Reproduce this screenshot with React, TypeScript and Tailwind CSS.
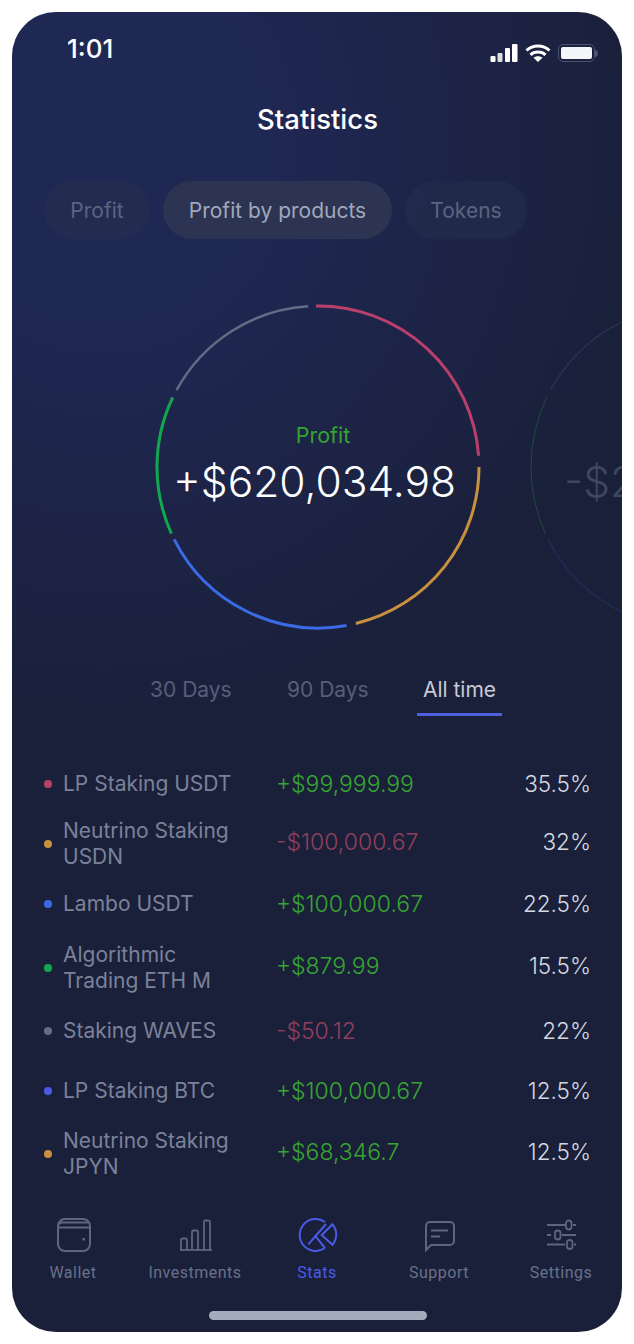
import React from "react";

const polar = (cx: number, cy: number, r: number, deg: number) => {
  const a = ((deg - 90) * Math.PI) / 180;
  return [cx + r * Math.cos(a), cy + r * Math.sin(a)];
};
const arc = (start: number, end: number, r = 161) => {
  const [x1, y1] = polar(163, 163, r, start);
  const [x2, y2] = polar(163, 163, r, end);
  return `M${x1.toFixed(2)} ${y1.toFixed(2)}A${r} ${r} 0 ${end - start > 180 ? 1 : 0} 1 ${x2.toFixed(2)} ${y2.toFixed(2)}`;
};

const Ring = ({ faded }: { faded?: boolean }) => (
  <svg width="326" height="326" viewBox="0 0 326 326" fill="none" strokeWidth={faded ? 1.5 : 3} className="absolute inset-0">
    {faded ? (
      <>
        <path d={arc(298.5, 360)} stroke="#2a3152" />
        <path d={arc(245.6, 295.6)} stroke="#1f4a3e" strokeWidth="1" />
        <path d={arc(170, 243.3)} stroke="#222b55" />
      </>
    ) : (
      <>
        <path d={arc(-0.7, 86)} stroke="#b8406a" />
        <path d={arc(90, 166.4)} stroke="#c8903f" />
        <path d={arc(169.8, 243.3)} stroke="#3a6ae6" />
        <path d={arc(245.6, 295.6)} stroke="#12a84f" />
        <path d={arc(298.5, 356.5)} stroke="#646c84" strokeWidth="2.5" />
      </>
    )}
  </svg>
);

const rows = [
  { dot: "bg-[#b8406a]", name: ["LP Staking USDT"], amt: "+$99,999.99", pos: true, pct: "35.5%", h: "h-[60px]" },
  { dot: "bg-[#c8903f]", name: ["Neutrino Staking", "USDN"], amt: "-$100,000.67", pos: false, pct: "32%", h: "h-[60px]" },
  { dot: "bg-[#3a6ae6]", name: ["Lambo USDT"], amt: "+$100,000.67", pos: true, pct: "22.5%", h: "h-[60px]" },
  { dot: "bg-[#12a84f]", name: ["Algorithmic", "Trading ETH M"], amt: "+$879.99", pos: true, pct: "15.5%", h: "h-[68px]" },
  { dot: "bg-[#646c84]", name: ["Staking WAVES"], amt: "-$50.12", pos: false, pct: "22%", h: "h-[58px]" },
  { dot: "bg-[#4a5be6]", name: ["LP Staking BTC"], amt: "+$100,000.67", pos: true, pct: "12.5%", h: "h-[62px]" },
  { dot: "bg-[#c8903f]", name: ["Neutrino Staking", "JPYN"], amt: "+$68,346.7", pos: true, pct: "12.5%", h: "h-[64px]" },
];

const Wallet = () => (
  <svg width="36" height="36" viewBox="0 0 36 36" fill="none" stroke="currentColor" strokeWidth="2">
    <rect x="3" y="2" width="32" height="32" rx="7" />
    <path d="M4 8c0-1.500 1-2.500 3-2.500h26M4 10.500h30" strokeWidth="1.800" />
    <rect x="27.500" y="21" width="2.500" height="2.500" fill="currentColor" stroke="none" />
  </svg>
);
const Bars = () => (
  <svg width="36" height="36" viewBox="0 0 36 36" fill="none" stroke="currentColor" strokeWidth="1.800">
    <path d="M3 33h32" />
    <path d="M4 33V23a1.500 1.500 0 0 1 1.500-1.500h3A1.500 1.500 0 0 1 10 23v10" />
    <path d="M15 33V15a1.500 1.500 0 0 1 1.500-1.500h3A1.500 1.500 0 0 1 21 15v18" />
    <path d="M27 33V5a1.500 1.500 0 0 1 1.500-1.500h3A1.500 1.500 0 0 1 33 5v28" />
  </svg>
);
const Pie = () => (
  <svg width="38" height="38" viewBox="0 0 38 38" fill="none" stroke="currentColor" strokeWidth="2" className="overflow-visible">
    <path d="M27 6A16 16 0 1 0 27 32" />
    <path d="M10.300 28.300 28 8" />
    <path d="M17 19.700 27 32" />
    <path d="M23.700 19 34.500 8.300A16 16 0 0 1 34.500 28.800z" />
  </svg>
);
const Chat = () => (
  <svg width="34" height="36" viewBox="0 0 34 36" fill="none" stroke="currentColor" strokeWidth="2">
    <path d="M8 5h20a4 4 0 0 1 4 4v15a4 4 0 0 1-4 4H9l-5 5V9a4 4 0 0 1 4-4z" />
    <path d="M9 13.500h17M9 19.500h9" />
  </svg>
);
const Sliders = () => (
  <svg width="32" height="32" viewBox="0 0 32 32" fill="none" stroke="currentColor" strokeWidth="1.800">
    <path d="M2 6h18M28 6h3M2 16h4M17 16h14M2 25.500h18M29 25.500h2" />
    <rect x="21" y="1.500" width="5.500" height="9" rx="2.700" />
    <rect x="10" y="11.500" width="5.500" height="9" rx="2.700" />
    <rect x="22" y="21" width="5.500" height="9" rx="2.700" />
  </svg>
);

const nav = [
  { label: "Wallet", Icon: Wallet },
  { label: "Investments", Icon: Bars },
  { label: "Stats", Icon: Pie, active: true },
  { label: "Support", Icon: Chat },
  { label: "Settings", Icon: Sliders },
];

export default function App() {
  return (
    <div className="min-h-[1344px] w-[634px] bg-white pt-3 pl-3 font-['Inter',sans-serif]">
      <div className="relative flex h-[1320px] w-[610px] flex-col overflow-hidden rounded-[44px] bg-[#1a2039] bg-[radial-gradient(ellipse_560px_600px_at_90px_130px,#1f2753_0%,#1f2753_30%,#1a2039_100%)]">
        <div className="flex h-[50px] shrink-0 items-end justify-between pr-[24px] pl-[55px]">
          <span className="text-[26px] leading-[26px] font-medium text-white">1:01</span>
          <div className="flex items-center gap-[7px]">
            <svg width="28" height="18" viewBox="0 0 28 18" fill="#fff">
              <rect x="0.500" y="12" width="5" height="6" rx="1" />
              <rect x="7.500" y="9" width="5" height="9" rx="1" opacity="0.85" />
              <rect x="15" y="4" width="5" height="14" rx="1" />
              <rect x="22" y="0" width="5.500" height="18" rx="1" />
            </svg>
            <svg width="26" height="18" viewBox="0 0 26 18" fill="none" stroke="#fff" strokeWidth="3">
              <path d="M1.500 6.500c6.500-6 16.500-6 23 0" />
              <path d="M5.500 10.800c4-3.600 11-3.600 15 0" />
              <path d="M13 18l-4.500-4.200c2.500-2 6.500-2 9 0z" fill="#fff" stroke="none" />
            </svg>
            <div className="flex items-center">
              <div className="h-[18px] w-[37px] rounded-[5px] border-[1.500px] border-[#4a5270] p-[2px]">
                <div className="h-full w-full rounded-[2px] bg-[#f4f5f7]" />
              </div>
              <div className="h-[7px] w-[3px] rounded-r bg-[#4a5270]" />
            </div>
          </div>
        </div>

        <h1 className="mt-[41px] pl-[1px] text-center text-[27.500px] leading-[32px] font-medium text-white">Statistics</h1>

        <div className="mt-[46px] flex gap-[13px] pl-[32px] text-[21px] leading-[60px]">
          <div className="h-[58px] w-[106px] rounded-full bg-[#293050]/45 text-center text-[#5b6480]">Profit</div>
          <div className="h-[58px] w-[229px] rounded-full bg-[#2c3452] text-center text-[#a1a8bd]">Profit by products</div>
          <div className="h-[58px] w-[122px] rounded-full bg-[#293050]/45 text-center text-[#5b6480]">Tokens</div>
        </div>

        <div className="mt-[65px] flex h-[326px] gap-[48px] pl-[143px]">
          <div className="relative h-[326px] w-[326px] shrink-0">
            <Ring />
            <div className="flex h-full flex-col items-center pt-[117px]">
              <span className="ml-[10px] text-[21.500px] leading-[28px] text-[#35a32f]">Profit</span>
              <span className="mt-[8px] mr-[7px] text-[42.500px] leading-[50px] font-light text-white">+$620,034.98</span>
            </div>
          </div>
          <div className="relative h-[326px] w-[326px] shrink-0">
            <Ring faded />
            <div className="flex h-full flex-col pt-[153px] pl-[35px]">
              <span className="text-[42.500px] leading-[50px] font-light text-[#3e4660]">-$2</span>
            </div>
          </div>
        </div>

        <div className="mt-[47px] flex h-[39px] items-start pl-[138px] text-[21px] leading-[26px] text-[#565e79]">
          <span className="w-[137px]">30 Days</span>
          <span className="w-[130px]">90 Days</span>
          <div className="flex h-[39px] w-[85px] flex-col items-center justify-between text-[#c6cad6]">
            <span>All time</span>
            <div className="h-[3px] w-full bg-[#5160dd]" />
          </div>
        </div>

        <div className="mt-[38px] flex flex-col pr-[31px] pl-[32px] text-[21px] leading-[26px]">
          {rows.map((r) => (
            <div key={r.name[0] + r.amt} className={`flex items-center ${r.h}`}>
              <div className={`mr-[11px] h-[8px] w-[8px] shrink-0 rounded-full ${r.dot}`} />
              <div className="w-[213px] shrink-0 text-[#7a8299]">
                {r.name.map((n) => (
                  <div key={n}>{n}</div>
                ))}
              </div>
              <div className={`flex-1 text-[23px] font-light ${r.name.length > 1 ? "mb-[4px]" : ""} ${r.pos ? "text-[#38a532]" : "text-[#8f3f5e]"}`}>{r.amt}</div>
              <div className={`text-right text-[22.500px] font-light text-[#d5d8e0] ${r.name.length > 1 ? "mb-[4px]" : ""}`}>{r.pct}</div>
            </div>
          ))}
        </div>

        <div className="absolute right-0 bottom-[50px] left-0 grid grid-cols-5">
          {nav.map(({ label, Icon, active }) => (
            <div key={label} className={`flex flex-col items-center font-['Roboto',sans-serif] text-[16px] leading-[18px] tracking-[0.500px] ${active ? "text-[#4a5be6]" : "text-[#5d6580]"}`}>
              <div className="flex h-[38px] items-center"><Icon /></div>
              <span className={`mt-[10px] ${active ? "" : "text-[#6a7189]"}`}>{label}</span>
            </div>
          ))}
        </div>

        <div className="absolute bottom-[12px] left-[197px] h-[9px] w-[218px] rounded-full bg-[#a3abbc]" />
      </div>
    </div>
  );
}
